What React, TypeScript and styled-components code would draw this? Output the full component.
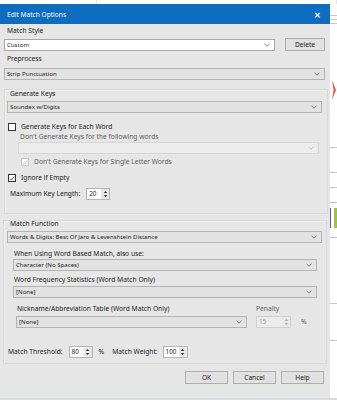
import styled, { createGlobalStyle } from 'styled-components';

const GlobalStyle = createGlobalStyle`
  html, body {
    margin: 0;
    padding: 0;
    background: #ffffff;
  }
  body {
    font-family: 'Noto Sans', 'Open Sans', sans-serif;
    color: #222222;
  }
`;

type boxProps = { $w?: number; $mt?: number; $ml?: number };
type comboProps = boxProps & { $kind?: 'edit' | 'list' | 'disabled' };

function Chevron({ color = '#666' }: { color?: string }) {
  return (
    <svg width="6" height="4" viewBox="0 0 6 4">
      <polyline points="0.5,0.8 3,3.2 5.5,0.8" fill="none" stroke={color} strokeWidth="0.8" />
    </svg>
  );
}

function Combo({ value, kind = 'list', w, mt, ml }: { value?: string; kind?: 'edit' | 'list' | 'disabled'; w: number; mt?: number; ml?: number }) {
  return (
    <ComboBox $kind={kind} $w={w} $mt={mt} $ml={ml}>
      <ComboText>{value}</ComboText>
      <Chevron color={kind === 'disabled' ? '#b5b5b5' : '#666'} />
    </ComboBox>
  );
}

function Spin({ value, w, disabled }: { value: string; w: number; disabled?: boolean }) {
  return (
    <SpinBox $w={w} $disabled={disabled}>
      <SpinText $disabled={disabled}>{value}</SpinText>
      <SpinArrows>
        <svg width="5" height="10" viewBox="0 0 5 10">
          <polygon points="2.5,2 4.3,4 0.7,4" fill={disabled ? '#aaa' : '#333'} />
          <polygon points="2.5,8 4.3,6 0.7,6" fill={disabled ? '#aaa' : '#333'} />
        </svg>
      </SpinArrows>
    </SpinBox>
  );
}

function Check({ checked, disabled }: { checked?: boolean; disabled?: boolean }) {
  return (
    <CheckBox $disabled={disabled}>
      {checked && (
        <svg width="7" height="7" viewBox="0 0 7 7">
          <polyline points="1,3.6 2.8,5.4 6,1.4" fill="none" stroke={disabled ? '#b0b0b0' : '#333'} strokeWidth="0.9" />
        </svg>
      )}
    </CheckBox>
  );
}

export default function App() {
  return (
    <Page>
      <GlobalStyle />
      <TopStrip>
        <StripLine $w={120} />
        <StripLine $w={150} />
      </TopStrip>
      <Main>
        <Dialog>
          <TitleBar>
            <Title>Edit Match Options</Title>
            <Close>✕</Close>
          </TitleBar>
          <Body>
            <Label $ml={3} $mt={2}>Match Style</Label>
            <Row $mt={2}>
              <Combo kind="edit" value="Custom" w={271} />
              <Button $w={40} $ml={10}>Delete</Button>
            </Row>
            <Label $ml={3} $mt={3}>Preprocess</Label>
            <Combo value="Strip Punctuation" w={321} mt={4} />

            <Group $mt={9} $h={125}>
              <Label $ml={5} $mt={-1}>Generate Keys</Label>
              <Combo value="Soundex w/Digits" w={315} mt={2} ml={2} />
              <CheckRow $mt={9} $ml={3}>
                <Check />
                <Label>Generate Keys for Each Word</Label>
              </CheckRow>
              <Label $ml={15} $mt={0} $muted>Don&apos;t Generate Keys for the following words</Label>
              <Combo kind="disabled" w={301} mt={0} ml={13} />
              <CheckRow $mt={3} $ml={16}>
                <Check checked disabled />
                <Label $muted>Don&apos;t Generate Keys for Single Letter Words</Label>
              </CheckRow>
              <CheckRow $mt={6} $ml={3}>
                <Check checked />
                <Label>Ignore if Empty</Label>
              </CheckRow>
              <InlineRow $mt={5} $ml={5}>
                <Label>Maximum Key Length:</Label>
                <Spacer $w={6} />
                <Spin value="20" w={24} />
              </InlineRow>
            </Group>

            <Group $mt={6} $h={144} $ml={-1}>
              <Label $ml={6} $mt={-2}>Match Function</Label>
              <Combo value="Words &amp; Digits: Best Of Jaro &amp; Levenshtein Distance" w={315} mt={2} ml={3} />
              <Label $ml={10} $mt={6}>When Using Word Based Match, also use:</Label>
              <Combo value="Character (No Spaces)" w={304} mt={0} ml={9} />
              <Label $ml={10} $mt={4}>Word Frequency Statistics (Word Match Only)</Label>
              <Combo value="[None]" w={304} mt={1} ml={9} />
              <InlineRow $mt={6} $ml={13}>
                <Column>
                  <Label>Nickname/Abbreviation Table (Word Match Only)</Label>
                  <Combo value="[None]" w={231} mt={2} ml={-1} />
                </Column>
                <Column $ml={9}>
                  <Label $muted>Penalty</Label>
                  <InlineRow $mt={2}>
                    <Spin value="15" w={35} disabled />
                    <Percent $muted $ml={10}>%</Percent>
                  </InlineRow>
                </Column>
              </InlineRow>
              <InlineRow $mt={18} $ml={4}>
                <Label>Match Threshold:</Label>
                <Spacer $w={6} />
                <Spin value="80" w={24} />
                <Percent $ml={6}>%</Percent>
                <Spacer $w={8} />
                <Label>Match Weight:</Label>
                <Spacer $w={5} />
                <Spin value="100" w={25} />
              </InlineRow>
            </Group>

            <ButtonRow>
              <Button $w={43}>OK</Button>
              <Button $w={43} $ml={5}>Cancel</Button>
              <Button $w={43} $ml={5}>Help</Button>
            </ButtonRow>
          </Body>
        </Dialog>
        <SideStrip>
          <SideLine $mt={11} />
          <SideLine $mt={3} />
          <SideLine $mt={3} />
          <SideMark />
          <SideLine $mt={47} />
          <SideLine $mt={24} />
          <SideLine $mt={14} />
          <SideLine $mt={14} $color="#a8c8ea" />
          <SideBar />
          <SideLine $mt={9} $color="#a8c8ea" />
          <SideLine $mt={65} />
          <SideLine $mt={36} />
        </SideStrip>
      </Main>
      <BottomLine />
    </Page>
  );
}

const Page = styled.div`
  width: 337px;
  height: 400px;
  overflow: hidden;
  background: #ffffff;
`;

const TopStrip = styled.div`
  height: 4px;
  display: flex;
  gap: 120px;
`;

const StripLine = styled.div<boxProps>`
  width: ${(p) => p.$w}px;
  border-right: 1px solid #e3e6ea;
  height: 4px;
`;

const Main = styled.div`
  display: flex;
  height: 394px;
`;

const Dialog = styled.div`
  width: 331px;
  height: 394px;
  background: #e6e6e6;
  display: flex;
  flex-direction: column;
  box-shadow: 1px 0 0 #cfcfcf;
`;

const TitleBar = styled.div`
  height: 20px;
  background: #0e6cc1;
  display: flex;
  align-items: center;
  justify-content: space-between;
  padding: 0 9px 0 7px;
`;

const Title = styled.span`
  color: #ffffff;
  font-size: 6.6px;
`;

const Close = styled.span`
  color: #ffffff;
  font-size: 8px;
  font-weight: 700;
`;

const Body = styled.div`
  display: flex;
  flex-direction: column;
  padding: 0 0 0 4px;
`;

const Label = styled.div<boxProps & { $muted?: boolean }>`
  font-size: 6.7px;
  line-height: 10px;
  white-space: nowrap;
  color: ${(p) => (p.$muted ? '#5e5e5e' : '#222222')};
  margin-left: ${(p) => p.$ml ?? 0}px;
  margin-top: ${(p) => p.$mt ?? 0}px;
`;

const Percent = styled(Label)`
  font-size: 6.8px;
`;

const Row = styled.div<boxProps>`
  display: flex;
  align-items: center;
  margin-top: ${(p) => p.$mt ?? 0}px;
`;

const InlineRow = styled.div<boxProps>`
  display: flex;
  align-items: center;
  margin-top: ${(p) => p.$mt ?? 0}px;
  margin-left: ${(p) => p.$ml ?? 0}px;
`;

const Column = styled.div<boxProps>`
  display: flex;
  flex-direction: column;
  margin-left: ${(p) => p.$ml ?? 0}px;
`;

const Spacer = styled.div<boxProps>`
  width: ${(p) => p.$w}px;
`;

const ComboBox = styled.div<comboProps>`
  box-sizing: border-box;
  width: ${(p) => p.$w}px;
  height: 12px;
  margin-top: ${(p) => p.$mt ?? 0}px;
  margin-left: ${(p) => p.$ml ?? 0}px;
  display: flex;
  align-items: center;
  justify-content: space-between;
  padding: 0 4px 0 2px;
  background: ${(p) => (p.$kind === 'edit' ? '#ffffff' : p.$kind === 'disabled' ? '#ececec' : '#e2e2e2')};
  border: 1px solid ${(p) => (p.$kind === 'edit' ? '#a8a8a8' : p.$kind === 'disabled' ? '#d6d6d6' : '#b4b4b4')};
`;

const ComboText = styled.span`
  font-size: 6.1px;
  line-height: 10px;
  white-space: nowrap;
  color: #222222;
`;

const Button = styled.div<boxProps>`
  box-sizing: border-box;
  width: ${(p) => p.$w}px;
  height: 13px;
  margin-left: ${(p) => p.$ml ?? 0}px;
  background: #e1e1e1;
  border: 1px solid #adadad;
  display: flex;
  align-items: center;
  justify-content: center;
  font-size: 6.6px;
  color: #222222;
`;

const ButtonRow = styled.div`
  display: flex;
  justify-content: flex-end;
  padding-right: 6px;
  margin-top: 7px;
`;

const Group = styled.div<boxProps & { $h: number }>`
  box-sizing: border-box;
  width: 324px;
  height: ${(p) => p.$h}px;
  margin-top: ${(p) => p.$mt ?? 0}px;
  margin-left: ${(p) => p.$ml ?? 0}px;
  border: 1px solid #d9d9d9;
  box-shadow: inset 1px 1px 0 #efefef;
  display: flex;
  flex-direction: column;
`;

const CheckRow = styled.div<boxProps>`
  display: flex;
  align-items: center;
  gap: 5px;
  margin-top: ${(p) => p.$mt ?? 0}px;
  margin-left: ${(p) => p.$ml ?? 0}px;
`;

const CheckBox = styled.div<{ $disabled?: boolean }>`
  box-sizing: border-box;
  width: 8px;
  height: 8px;
  background: #ffffff;
  border: 1px solid ${(p) => (p.$disabled ? '#c4c4c4' : '#333333')};
  display: flex;
  align-items: center;
  justify-content: center;
`;

const SpinBox = styled.div<{ $w: number; $disabled?: boolean }>`
  box-sizing: border-box;
  width: ${(p) => p.$w}px;
  height: 12px;
  display: flex;
  background: ${(p) => (p.$disabled ? '#ececec' : '#ffffff')};
  border: 1px solid ${(p) => (p.$disabled ? '#cfcfcf' : '#b4b4b4')};
`;

const SpinText = styled.span<{ $disabled?: boolean }>`
  flex: 1;
  font-size: 6.3px;
  line-height: 10px;
  padding-left: 2px;
  color: ${(p) => (p.$disabled ? '#9a9a9a' : '#222222')};
`;

const SpinArrows = styled.div`
  width: 8px;
  display: flex;
  align-items: center;
  justify-content: center;
  background: #e8e8e8;
`;

const SideStrip = styled.div`
  flex: 1;
  display: flex;
  flex-direction: column;
  background: #ffffff;
`;

const SideLine = styled.div<{ $mt: number; $color?: string }>`
  height: 1px;
  margin-top: ${(p) => p.$mt}px;
  background: ${(p) => p.$color ?? '#c9c9c9'};
`;

const SideMark = styled.div`
  width: 4px;
  height: 20px;
  margin-top: 56px;
  margin-left: 2px;
  background: #e2553a;
  clip-path: polygon(0 0, 100% 50%, 0 100%, 40% 50%);
`;

const SideBar = styled.div`
  width: 6px;
  height: 20px;
  margin-top: 5px;
  display: flex;
  border-left: 1px solid #7a4fb0;
  background: linear-gradient(90deg, #ffffff 50%, #9bc24a 50%);
`;

const BottomLine = styled.div`
  height: 2px;
  background: #d7dbe8;
`;
